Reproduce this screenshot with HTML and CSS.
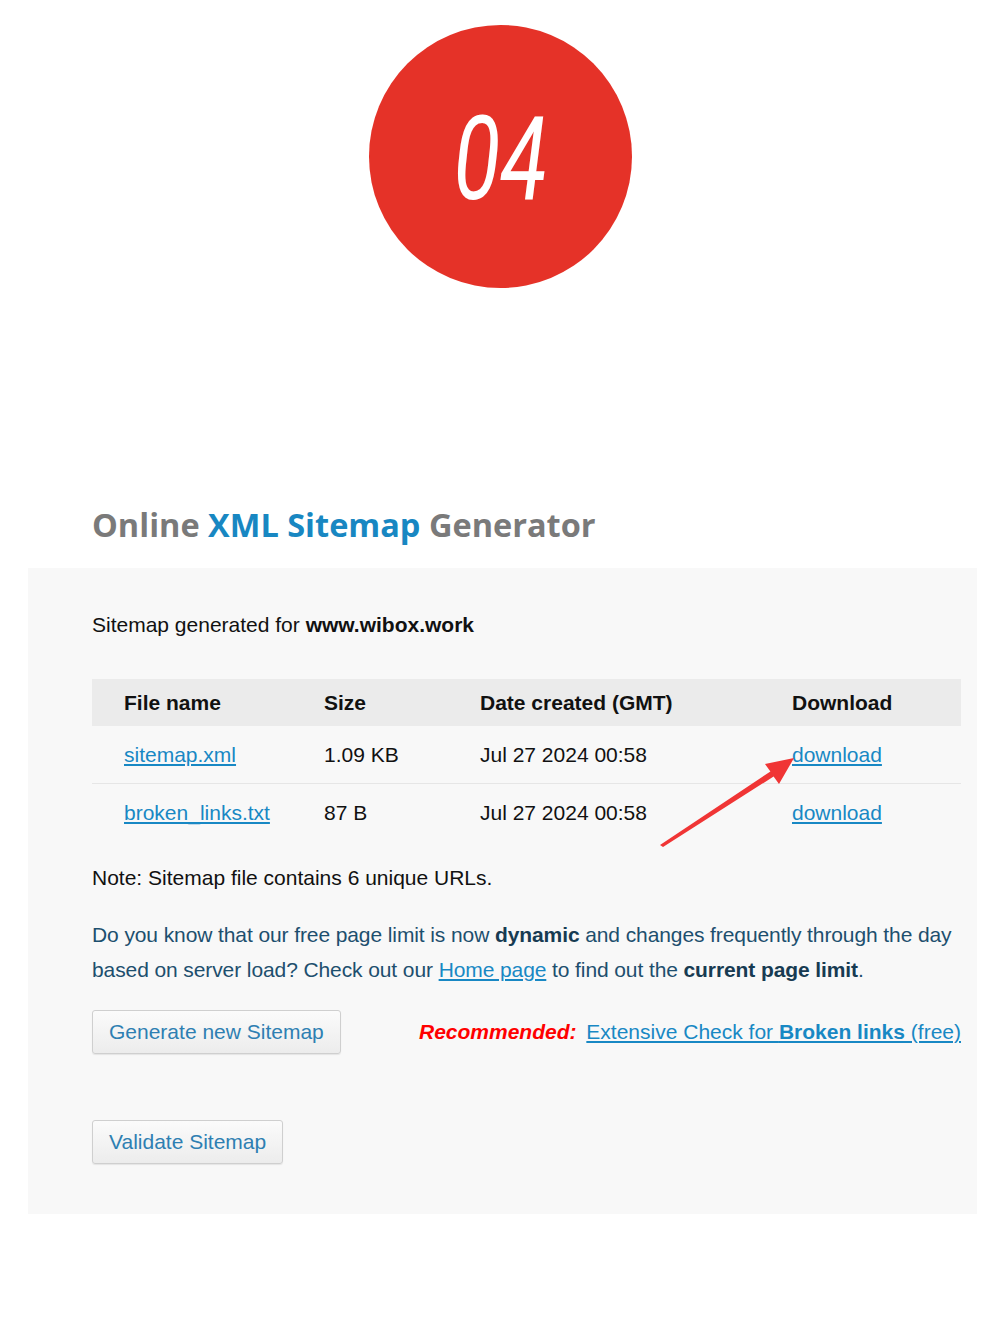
FILE: index.html
```html
<!DOCTYPE html>
<html lang="en">
<head>
    <meta charset="UTF-8">
    <meta name="viewport" content="width=device-width, initial-scale=1.0">
    <title>Online XML Sitemap Generator</title>
    <link rel="stylesheet" href="styles.css">
</head>
<body>
    <!-- Step badge -->
    <div class="badge"><span class="badge-num">04</span></div>

    <div class="page">
        <h1 class="title">Online <span class="blue">XML Sitemap</span> Generator</h1>

        <!-- Result panel -->
        <div class="panel">
            <p class="generated">Sitemap generated for <strong>www.wibox.work</strong></p>

            <table class="files">
                <thead>
                    <tr>
                        <th class="col-name">File name</th>
                        <th class="col-size">Size</th>
                        <th class="col-date">Date created (GMT)</th>
                        <th class="col-dl">Download</th>
                    </tr>
                </thead>
                <tbody>
                    <tr>
                        <td class="col-name"><a href="#">sitemap.xml</a></td>
                        <td>1.09 KB</td>
                        <td>Jul 27 2024 00:58</td>
                        <td><a href="#">download</a></td>
                    </tr>
                    <tr>
                        <td class="col-name"><a href="#">broken_links.txt</a></td>
                        <td>87 B</td>
                        <td>Jul 27 2024 00:58</td>
                        <td><a href="#">download</a></td>
                    </tr>
                </tbody>
            </table>

            <p class="note">Note: Sitemap file contains 6 unique URLs.</p>

            <p class="limit">Do you know that our free page limit is now <strong>dynamic</strong> and changes frequently through the day based on server load? Check out our <a href="#">Home page</a> to find out the <strong>current page limit</strong>.</p>

            <div class="actions">
                <button class="btn">Generate new Sitemap</button>
                <span class="recommend"><em>Recommended:</em> <a href="#">Extensive Check for <strong>Broken links</strong> (free)</a></span>
            </div>

            <div class="actions second">
                <button class="btn">Validate Sitemap</button>
            </div>

            <!-- annotation arrow -->
            <svg class="arrow" width="145" height="100" viewBox="0 0 145 100">
                <polygon points="139,8 124,34 118.6,26.5 8,97 5,95 115.4,21.5 110,14" fill="#f03535"/>
            </svg>
        </div>
    </div>
</body>
</html>
```

FILE: styles.css
```css
body {
    margin: 0;
    background-color: #fff;
    font-family: "Liberation Sans", Arial, sans-serif;
    color: #111;
}
.badge {
    width: 263px;
    height: 263px;
    margin: 25px auto 0;
    border-radius: 50%;
    background-color: #e53228;
    display: flex;
    align-items: center;
    justify-content: center;
}
.badge-num {
    display: inline-block;
    color: #fff;
    font-family: Roboto, "Liberation Sans", sans-serif;
    font-style: italic;
    font-size: 116px;
    line-height: 1;
    transform: scaleX(0.74);
    margin-top: 4px;
}
.page {
    margin: 0 23px 0 28px;
}
.title {
    margin: 217px 0 23px;
    padding-left: 64px;
    font-family: "Open Sans", sans-serif;
    font-weight: 700;
    font-size: 32.5px;
    line-height: 40px;
    color: #7a7a7a;
}
.title .blue {
    color: #1887c2;
}
.panel {
    position: relative;
    background-color: #f8f8f8;
    padding: 42px 16px 50px 64px;
    font-size: 21px;
}
.generated {
    margin: 0 0 39px;
    line-height: 30px;
}
.files {
    width: 100%;
    border-collapse: collapse;
}
.files th {
    background-color: #ebebeb;
    height: 47px;
    text-align: left;
    font-weight: bold;
    padding: 0;
}
.files td {
    height: 57px;
    padding: 0;
}
.files tbody tr + tr td {
    border-top: 1px solid #e6e6e6;
}
.files .col-name {
    width: 200px;
    padding-left: 32px;
}
.files .col-size {
    width: 156px;
}
.files .col-date {
    width: 312px;
}
a {
    color: #1888c4;
}
.note {
    margin: 22px 0 0;
    line-height: 30px;
}
.limit {
    margin: 24px 0 0;
    line-height: 35px;
    color: #1d4f6e;
    letter-spacing: -0.1px;
}
.limit strong {
    color: #173b52;
}
.actions {
    display: flex;
    align-items: center;
    margin-top: 23px;
}
.actions.second {
    margin-top: 66px;
}
.btn {
    height: 44px;
    padding: 0 16px;
    font-family: inherit;
    font-size: 21px;
    color: #2e7fb2;
    background: linear-gradient(#fbfbfb, #ececec);
    border: 1px solid #cfcfcf;
    border-radius: 3px;
    box-shadow: 0 1px 1px rgba(0, 0, 0, 0.08);
    cursor: pointer;
}
.recommend {
    margin-left: auto;
}
.recommend em {
    color: #f00;
    font-weight: bold;
    margin-right: 4px;
}
.arrow {
    position: absolute;
    left: 627px;
    top: 182px;
}
```
